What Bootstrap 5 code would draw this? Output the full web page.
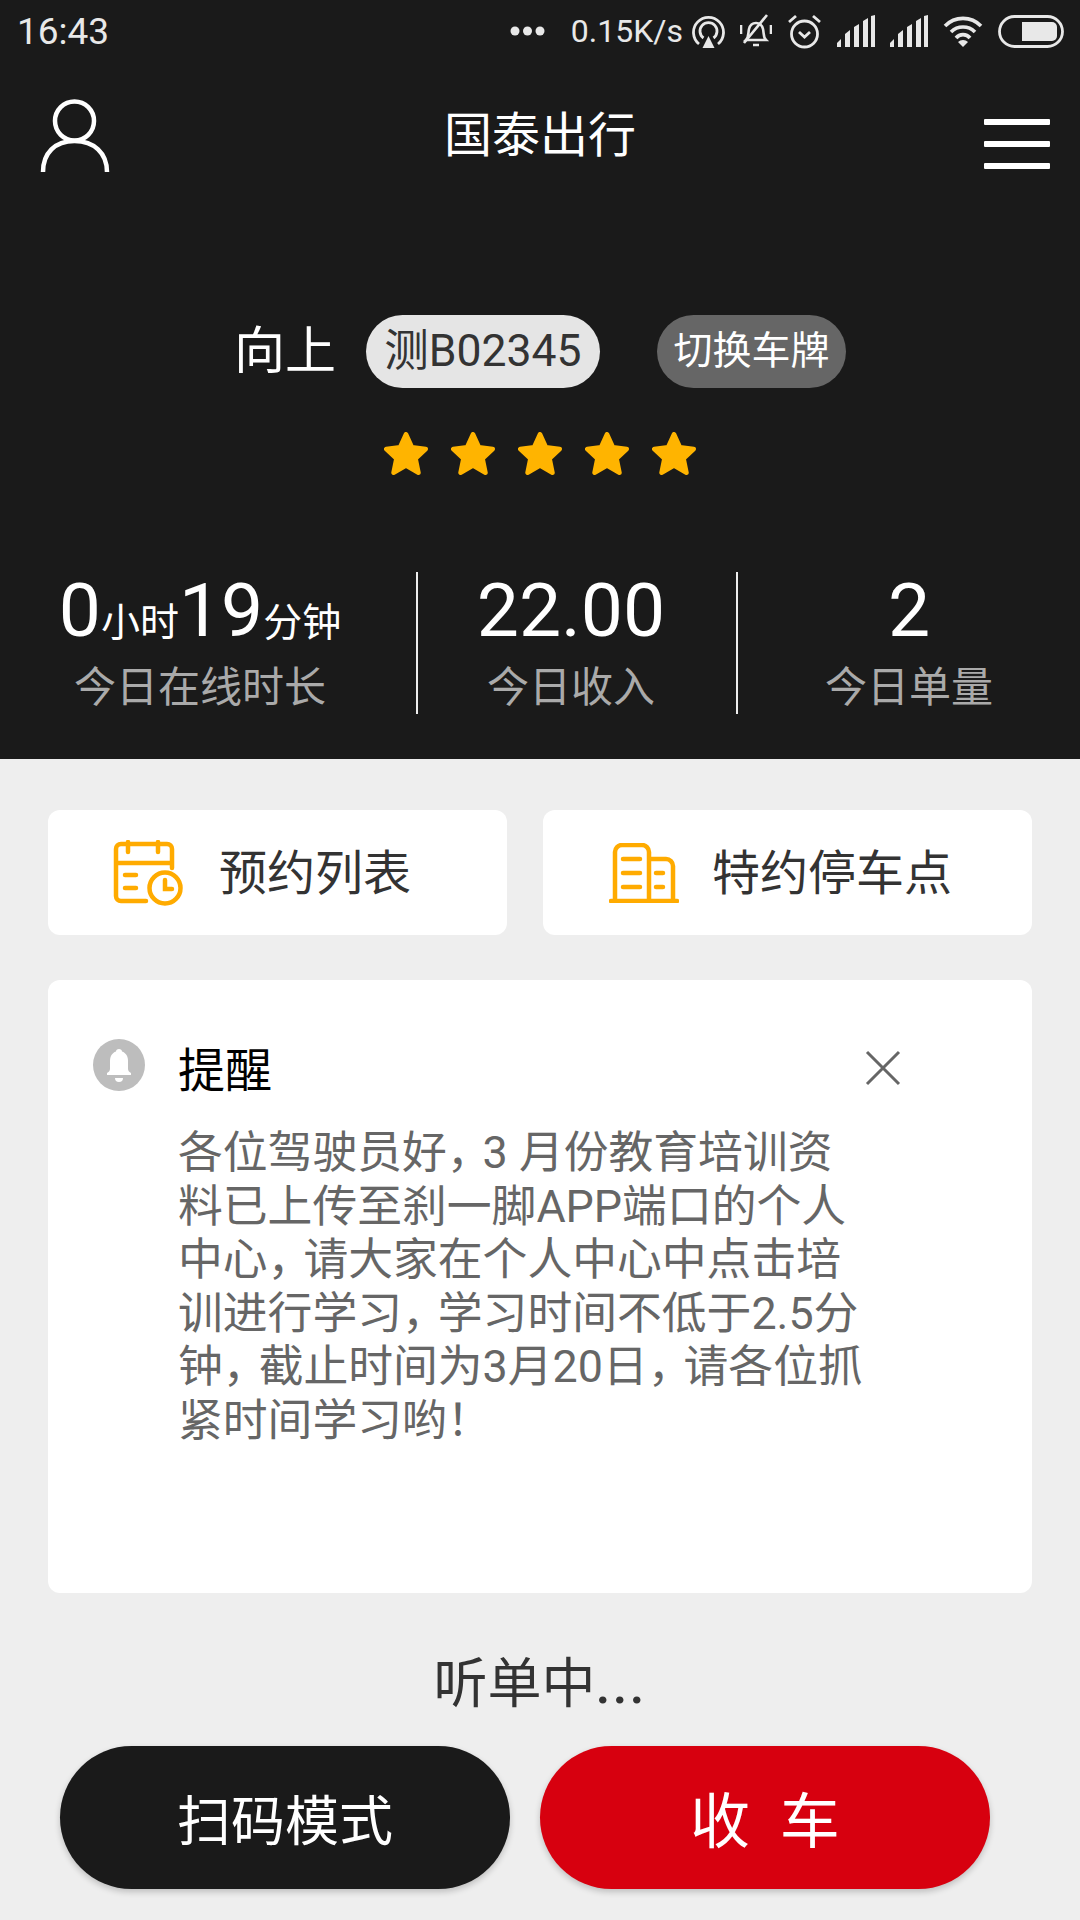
<!DOCTYPE html>
<html lang="zh">
<head>
    <meta charset="UTF-8">
    <meta name="viewport" content="width=device-width, initial-scale=1.0">
    <title>国泰出行</title>
    <link rel="stylesheet" href="https://cdn.jsdelivr.net/npm/bootstrap@5.3.0/dist/css/bootstrap.min.css">
    <style>
        html, body { margin: 0; }
        body {
            width: 1080px;
            height: 1920px;
            overflow: hidden;
            background: #eeeeee;
            font-family: Roboto, "Noto Sans CJK SC", sans-serif;
            color: #333;
        }
        .dark-top { background: #1a1a1a; height: 759px; color: #fff; }
        .status-row { height: 62px; padding: 0 16px 0 17px; color: #e8e8e8; }
        .status-time { font-size: 37px; line-height: 1; }
        .status-dots { margin-left: auto; }
        .status-speed { font-size: 32px; line-height: 1; margin: 0 9px 0 26px; }
        .status-gap { margin-left: 15px; }
        .title-row { height: 110px; margin-top: 19px; padding: 0 30px 0 40px; }
        .page-title { font-size: 48px; line-height: 1; margin-right: 14px; }
        .burger-icon { margin-top: 16px; }
        .driver-row { margin-top: 124px; height: 73px; padding-left: 234px; }
        .driver-name { font-size: 51px; line-height: 1; width: 132px; }
        .plate-pill, .switch-pill { height: 73px; border-radius: 37px; line-height: 73px; text-align: center; }
        .plate-pill { width: 234px; background: #e5e5e5; color: #333; font-size: 44.5px; }
        .switch-pill { width: 189px; background: #666; color: #fff; font-size: 39px; margin-left: 57px; }
        .star-row { margin-top: 44px; gap: 23px; height: 44px; }
        .stat-row { margin-top: 96px; height: 142px; }
        .stat-a { width: 416px; padding-right: 16px; }
        .stat-b { width: 322px; padding-right: 12px; border-left: 2px solid #eee; border-right: 2px solid #eee; }
        .stat-c { width: 342px; }
        .stat-num { font-size: 75px; line-height: 76px; color: #fff; height: 91px; }
        .stat-unit { font-size: 39px; }
        .stat-label { font-size: 42px; line-height: 50px; color: #aaa; }
        .shortcut-row { padding: 51px 48px 0; gap: 36px; }
        .shortcut-box { height: 125px; background: #fff; border-radius: 12px; font-size: 48px; color: #333; gap: 36px; }
        .shortcut-box span { margin-top: 2px; }
        .box-a { width: 459px; padding-left: 65px; }
        .box-b { width: 489px; padding-left: 66px; gap: 33px; }
        .notice-box { margin: 45px 48px 0; height: 613px; background: #fff; border-radius: 12px; padding: 60px 44px 0 45px; }
        .notice-head { height: 50px; }
        .notice-title { font-size: 47px; color: #000; margin: 10px 0 0 33px; line-height: 1; }
        .notice-close { margin: 6px 87px 0 auto; }
        .notice-text { margin: 36px 0 0 85px; font-size: 44.8px; line-height: 53.5px; color: #666; white-space: nowrap; }
        .tight-mark { letter-spacing: -9px; }
        .listen-text { margin-top: 62px; font-size: 54px; line-height: 60px; text-align: center; color: #333; }
        .listen-dots { letter-spacing: 2px; font-weight: 500; }
        .bottom-row { margin-top: 31px; padding-left: 60px; gap: 30px; }
        .round-btn { width: 450px; height: 143px; padding: 10px 0 0; border-radius: 72px; border: 0; color: #fff; font-size: 54px; box-shadow: 0 3px 6px rgba(0,0,0,.2); }
        .btn-scan { background: #1a1a1a; }
        .btn-stop { background: #d7000f; font-size: 60px; }
    </style>
</head>
<body>
    <div class="dark-top">
        <div class="status-row d-flex align-items-center">
            <span class="status-time">16:43</span>
            <svg class="status-dots" width="35" height="12" viewBox="0 0 35 12"><g fill="#e8e8e8"><circle cx="5" cy="6" r="4.500"/><circle cx="17.500" cy="6" r="4.500"/><circle cx="30" cy="6" r="4.500"/></g></svg>
            <span class="status-speed">0.15K/s</span>
            <svg width="33" height="33" viewBox="0 0 33 33" fill="none" stroke="#e8e8e8" stroke-width="2.800"><path d="M7 29A15 15 0 1 1 26 29"/><path d="M11.500 23A8.500 8.500 0 1 1 21.500 23"/><path d="M16.500 21l6 12h-12z" fill="#e8e8e8" stroke="none"/></svg>
            <svg class="status-gap" width="32" height="34" viewBox="0 0 32 34" fill="none" stroke="#e8e8e8" stroke-width="2.600"><path d="M6 26c3-3 2-7 3-11 1-4 4-6 7-6s6 2 7 6c1 4 0 8 3 11z"/><path d="M13 31h6M4 29L27 1M1 11v9M31 11v9"/></svg>
            <svg class="status-gap" width="35" height="36" viewBox="0 0 35 36" fill="none" stroke="#e8e8e8" stroke-width="2.800"><circle cx="17.500" cy="21" r="13"/><path d="M12 19l5.500 5 5.500-5M2 9l7-6M33 9l-7-6"/></svg>
            <svg class="status-gap" width="38" height="32" viewBox="0 0 38 32"><path fill="#e8e8e8" d="M0 32v-4l4-4v8zM8 32V19l5-4v17zM17 32V12l5-3v23zM26 32V6l5-3v29zM34 32V1l4-1v32z"/></svg>
            <svg class="status-gap" width="38" height="32" viewBox="0 0 38 32"><path fill="#e8e8e8" d="M0 32v-4l4-4v8zM8 32V19l5-4v17zM17 32V12l5-3v23zM26 32V6l5-3v29zM34 32V1l4-1v32z"/></svg>
            <svg class="status-gap" width="40" height="32" viewBox="0 0 40 32" fill="none" stroke="#e8e8e8" stroke-width="3.600"><path d="M2 11a25 25 0 0 1 36 0M8 17a17 17 0 0 1 24 0M13 23a9 9 0 0 1 14 0"/><path d="M20 32l-5-5a7 7 0 0 1 10 0z" fill="#e8e8e8" stroke="none"/></svg>
            <svg class="status-gap" width="66" height="33" viewBox="0 0 66 33"><rect x="1.500" y="1.500" width="63" height="30" rx="15" fill="none" stroke="#e8e8e8" stroke-width="2.800"/><path d="M24 7h30a5 5 0 0 1 5 5v9a5 5 0 0 1-5 5H24z" fill="#e8e8e8"/></svg>
        </div>

        <div class="title-row d-flex align-items-center justify-content-between">
            <svg width="70" height="74" viewBox="0 0 70 74" fill="none" stroke="#fff" stroke-width="4.500"><circle cx="34.500" cy="22" r="19.500"/><path d="M3 73C3 54 15 42 34.500 42S67 54 67 73"/></svg>
            <span class="page-title">国泰出行</span>
            <svg class="burger-icon" width="66" height="50" viewBox="0 0 66 50" fill="#fff"><rect width="66" height="6" rx="1"/><rect y="22" width="66" height="6" rx="1"/><rect y="44" width="66" height="6" rx="1"/></svg>
        </div>

        <div class="driver-row d-flex align-items-center">
            <span class="driver-name">向上</span>
            <span class="plate-pill">测B02345</span>
            <span class="switch-pill">切换车牌</span>
        </div>

        <div class="star-row d-flex justify-content-center">
            <svg width="44" height="44" viewBox="1.400 1.400 21.200 21.200"><path fill="#ffb400" stroke="#ffb400" stroke-width="2.200" stroke-linejoin="round" d="M12 2.500l2.900 6.300 6.600.8-4.900 4.600 1.400 6.800-6-3.400-6 3.400 1.400-6.800-4.900-4.600 6.600-.8z"/></svg>
            <svg width="44" height="44" viewBox="1.400 1.400 21.200 21.200"><path fill="#ffb400" stroke="#ffb400" stroke-width="2.200" stroke-linejoin="round" d="M12 2.500l2.900 6.300 6.600.8-4.900 4.600 1.400 6.800-6-3.400-6 3.400 1.400-6.800-4.900-4.600 6.600-.8z"/></svg>
            <svg width="44" height="44" viewBox="1.400 1.400 21.200 21.200"><path fill="#ffb400" stroke="#ffb400" stroke-width="2.200" stroke-linejoin="round" d="M12 2.500l2.900 6.300 6.600.8-4.900 4.600 1.400 6.800-6-3.400-6 3.400 1.400-6.800-4.900-4.600 6.600-.8z"/></svg>
            <svg width="44" height="44" viewBox="1.400 1.400 21.200 21.200"><path fill="#ffb400" stroke="#ffb400" stroke-width="2.200" stroke-linejoin="round" d="M12 2.500l2.900 6.300 6.600.8-4.900 4.600 1.400 6.800-6-3.400-6 3.400 1.400-6.800-4.900-4.600 6.600-.8z"/></svg>
            <svg width="44" height="44" viewBox="1.400 1.400 21.200 21.200"><path fill="#ffb400" stroke="#ffb400" stroke-width="2.200" stroke-linejoin="round" d="M12 2.500l2.900 6.300 6.600.8-4.900 4.600 1.400 6.800-6-3.400-6 3.400 1.400-6.800-4.900-4.600 6.600-.8z"/></svg>
        </div>

        <div class="stat-row d-flex text-center">
            <div class="stat-a">
                <div class="stat-num">0<span class="stat-unit">小时</span>19<span class="stat-unit">分钟</span></div>
                <div class="stat-label">今日在线时长</div>
            </div>
            <div class="stat-b">
                <div class="stat-num">22.00</div>
                <div class="stat-label">今日收入</div>
            </div>
            <div class="stat-c">
                <div class="stat-num">2</div>
                <div class="stat-label">今日单量</div>
            </div>
        </div>
    </div>

    <div class="shortcut-row d-flex">
        <div class="shortcut-box box-a d-flex align-items-center">
            <svg width="70" height="66" viewBox="0 0 70 66" fill="none" stroke="#ffab00" stroke-width="4.500" stroke-linecap="round"><path d="M33 61H8a5 5 0 0 1-5-5V9a5 5 0 0 1 5-5h46a5 5 0 0 1 5 5v19M3 23h56M15 2v10M45 2v10M12 35h11M12 48h11"/><circle cx="52" cy="48" r="15.500"/><path d="M52 40v9h7"/></svg>
            <span>预约列表</span>
        </div>
        <div class="shortcut-box box-b d-flex align-items-center">
            <svg width="70" height="60" viewBox="0 0 70 60" fill="none" stroke="#ffab00" stroke-width="4.500" stroke-linecap="round"><path d="M2 58h66M6 58V9a7 7 0 0 1 7-7h20a7 7 0 0 1 7 7v49M40 16h17a7 7 0 0 1 7 7v35M14 16h17M14 30h17M14 44h17M47 30h7M47 44h7"/></svg>
            <span>特约停车点</span>
        </div>
    </div>

    <div class="notice-box">
        <div class="notice-head d-flex align-items-center">
            <svg width="52" height="52" viewBox="0 0 52 52"><circle cx="26" cy="26" r="26" fill="#bdbdbd"/><path fill="#fff" d="M26 10c1.800 0 3 1 3 2.600 4 1.400 6 4.800 6 9.400v8c0 2 1.500 3 3 4v2H14v-2c1.500-1 3-2 3-4v-8c0-4.600 2-8 6-9.400 0-1.600 1.200-2.600 3-2.600zM22 39h8a4 4 0 0 1-8 0z"/></svg>
            <span class="notice-title">提醒</span>
            <svg class="notice-close" width="36" height="36" viewBox="0 0 36 36" stroke="#666" stroke-width="3"><path d="M2 2l32 32M34 2L2 34"/></svg>
        </div>
        <div class="notice-text">各位驾驶员好<span class="tight-mark">，</span>3 月份教育培训资<br>料已上传至刹一脚APP端口的个人<br>中心<span class="tight-mark">，</span>请大家在个人中心中点击培<br>训进行学习<span class="tight-mark">，</span>学习时间不低于2.5分<br>钟<span class="tight-mark">，</span>截止时间为3月20日<span class="tight-mark">，</span>请各位抓<br>紧时间学习哟<span class="tight-mark">！</span></div>
    </div>

    <div class="listen-text">听单中<span class="listen-dots">...</span></div>

    <div class="bottom-row d-flex">
        <button type="button" class="round-btn btn-scan">扫码模式</button>
        <button type="button" class="round-btn btn-stop">收&nbsp;&nbsp;车</button>
    </div>

    <script src="https://cdn.jsdelivr.net/npm/bootstrap@5.3.0/dist/js/bootstrap.bundle.min.js"></script>
</body>
</html>
